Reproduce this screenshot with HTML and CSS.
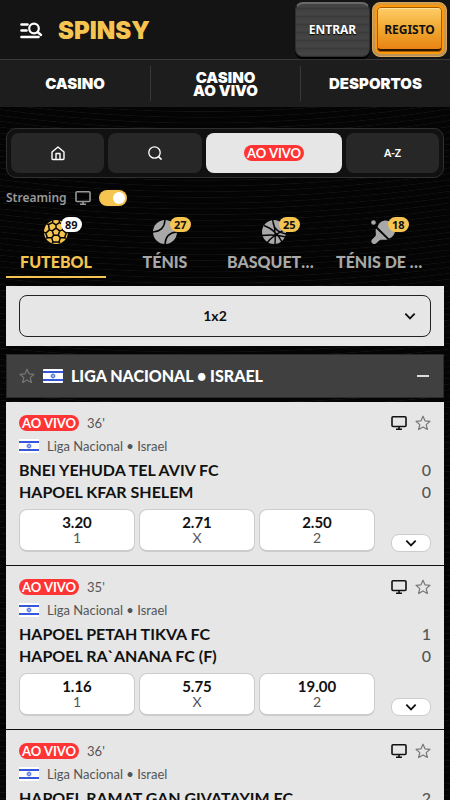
FILE: index.html
```html
<!DOCTYPE html>
<html lang="pt">
<head>
<meta charset="utf-8">
<meta name="viewport" content="width=device-width, initial-scale=1">
<title>Spinsy</title>
<link rel="stylesheet" href="styles.css">
</head>
<body>
<svg class="sprite" aria-hidden="true">
  <symbol id="star" viewBox="0 0 16 16"><path d="M8 1.200l2 4.600 5 .5-3.800 3.300 1.200 4.900L8 11.900l-4.400 2.600 1.200-4.900L1 6.300l5-.5z" fill="none" stroke="currentColor" stroke-width="1.200" stroke-linejoin="round"/></symbol>
  <symbol id="screen" viewBox="0 0 16 16"><path d="M2 1.700h12q1 0 1 1v7.800q0 1-1 1H2q-1 0-1-1V2.700q0-1 1-1zM8 11.500v2.500M5 14.200h6" fill="none" stroke="currentColor" stroke-width="1.600"/></symbol>
  <symbol id="chevron" viewBox="0 0 12 12"><path d="M2 4l4 4 4-4" fill="none" stroke="currentColor" stroke-width="1.600"/></symbol>
  <symbol id="flag" viewBox="0 0 20 14"><rect width="20" height="14" rx="1" fill="#fff"/><path d="M0 2h20v2H0zM0 10h20v2H0z" fill="#3458d8"/><path d="M10 4.600l2.100 3.500H7.900zM10 9.400L7.900 5.900h4.200z" fill="none" stroke="#3458d8" stroke-width=".7"/></symbol>
</svg>

<header class="top">
  <button class="menu" aria-label="Menu e pesquisa">
    <svg width="24" height="18" viewBox="0 0 24 18"><path d="M1.500 2.500h6M1.500 8.500h5M1.500 15h17" stroke="#fff" stroke-width="2.600" stroke-linecap="round"/><circle cx="14" cy="6.500" r="4.800" fill="none" stroke="#fff" stroke-width="2.200"/><path d="M17.500 10l3.500 3" stroke="#fff" stroke-width="2.400" stroke-linecap="round"/></svg>
  </button>
  <a class="logo" href="#">SPINSY</a>
  <div class="account">
    <button class="login">ENTRAR</button>
    <button class="register"><span>REGISTO</span></button>
  </div>
</header>
<nav class="sections">
  <a href="#">CASINO</a>
  <a href="#">CASINO<br>AO VIVO</a>
  <a href="#">DESPORTOS</a>
</nav>

<main>
  <nav class="modes">
    <button aria-label="Início"><svg width="16" height="16" viewBox="0 0 16 16"><path d="M2 7l6-5 6 5v6.500q0 1-1 1H3q-1 0-1-1zM6 14V8.500h4V14" fill="none" stroke="currentColor" stroke-width="1.400" stroke-linejoin="round"/></svg></button>
    <button aria-label="Pesquisar"><svg width="16" height="16" viewBox="0 0 16 16"><circle cx="7.500" cy="7.500" r="5.700" fill="none" stroke="currentColor" stroke-width="1.300"/><path d="M11.600 11.600l3 3" stroke="currentColor" stroke-width="1.500"/></svg></button>
    <button class="chosen"><span class="live">AO VIVO</span></button>
    <button>A-Z</button>
  </nav>

  <label class="streaming">Streaming
    <svg width="16" height="16"><use href="#screen"/></svg>
    <input type="checkbox" role="switch" checked>
  </label>

  <nav class="sports">
    <a class="sport active" href="#">
      <span class="ball"><svg width="24" height="24" viewBox="0 0 24 24"><circle cx="12" cy="12" r="12" fill="currentColor"/><g stroke="#050505" stroke-width="1.500" fill="none"><path d="M12 8.200l3.700 2.700-1.400 4.300H9.700l-1.400-4.300zM12 8.200V4.800M15.700 10.900l3-1M14.300 15.200l2 2.600M9.700 15.200l-2 2.600M8.300 10.900l-3-1M12 4.800L8.500 2.500 4.500 4.500l.8 5.400-3.500 3.200 1.500 4.500 4.400.2 1.300 4.300h6l1.300-4.300 4.400-.2 1.500-4.500-3.500-3.200.8-5.400-4-2zM8.500 2.500L8.800.3M15.500 2.500l-.3-2.200M4.500 4.500L3 4M19.500 4.500L21 4M1.800 13.100l-1.800-1M22.200 13.100l1.800-1M3.300 17.600l-1 1M20.700 17.600l1 1M9 22.100l-1 1M15 22.100l1 1"/></g></svg><b>89</b></span>
      <span class="name">FUTEBOL</span>
    </a>
    <a class="sport" href="#">
      <span class="ball"><svg width="24" height="24" viewBox="0 0 24 24"><circle cx="12" cy="12" r="12" fill="currentColor"/><path d="M-.5 12Q11.500 11.500 12-.5M24.500 12Q12.500 12.500 12 24.500" fill="none" stroke="#050505" stroke-width="1.500"/></svg><b>27</b></span>
      <span class="name">TÉNIS</span>
    </a>
    <a class="sport" href="#">
      <span class="ball"><svg width="24" height="24" viewBox="0 0 24 24"><circle cx="12" cy="12" r="12" fill="currentColor"/><path d="M2 5.500Q14 10 20 22M10.500 0Q14 10 13 24M0 15.500Q13 14 24 17M5 23Q10 16 24 9M11 3Q13 12 24 14" fill="none" stroke="#050505" stroke-width="1.400"/></svg><b>25</b></span>
      <span class="name">BASQUETEBOL</span>
    </a>
    <a class="sport" href="#">
      <span class="ball"><svg width="24" height="24" viewBox="0 0 24 24"><g fill="currentColor"><circle cx="2.500" cy="2.500" r="2.300"/><path d="M6.500 7C9-1 18-1 22 4s2 13-4 14.500z"/><path d="M5 8.500l11.500 11c-3 1-5.500-.5-8 .8L5 23.500c-3 2-6-1.500-4-4l3.500-3.500c1-2-.5-4.500.5-7.500z"/></g></svg><b>18</b></span>
      <span class="name">TÉNIS DE MESA</span>
    </a>
  </nav>

  <div class="market">
    <select aria-label="Mercado"><option>1x2</option></select>
    <svg width="14" height="14"><use href="#chevron"/></svg>
  </div>

  <h2 class="league">
    <button class="icon" aria-label="Favorito"><svg width="16" height="16"><use href="#star"/></svg></button>
    <svg width="20" height="14"><use href="#flag"/></svg>
    <span>LIGA NACIONAL • ISRAEL</span>
    <button class="icon collapse" aria-label="Recolher"><svg width="12" height="12"><path d="M0 6h12" stroke="currentColor" stroke-width="2"/></svg></button>
  </h2>

  <section class="matches">
    <article class="match">
      <div class="status"><span class="live">AO VIVO</span><time>36'</time>
        <button class="icon tv" aria-label="Ver transmissão"><svg width="16" height="16"><use href="#screen"/></svg></button>
        <button class="icon" aria-label="Favorito"><svg width="16" height="16"><use href="#star"/></svg></button></div>
      <div class="where"><svg width="20" height="14"><use href="#flag"/></svg>Liga Nacional • Israel</div>
      <div class="team"><span>BNEI YEHUDA TEL AVIV FC</span><span class="score">0</span></div>
      <div class="team"><span>HAPOEL KFAR SHELEM</span><span class="score">0</span></div>
      <div class="odds">
        <button>3.20<small>1</small></button><button>2.71<small>X</small></button><button>2.50<small>2</small></button>
        <button class="more" aria-label="Mais mercados"><svg width="14" height="14"><use href="#chevron"/></svg></button>
      </div>
    </article>
    <article class="match">
      <div class="status"><span class="live">AO VIVO</span><time>35'</time>
        <button class="icon tv" aria-label="Ver transmissão"><svg width="16" height="16"><use href="#screen"/></svg></button>
        <button class="icon" aria-label="Favorito"><svg width="16" height="16"><use href="#star"/></svg></button></div>
      <div class="where"><svg width="20" height="14"><use href="#flag"/></svg>Liga Nacional • Israel</div>
      <div class="team"><span>HAPOEL PETAH TIKVA FC</span><span class="score">1</span></div>
      <div class="team"><span>HAPOEL RA`ANANA FC (F)</span><span class="score">0</span></div>
      <div class="odds">
        <button>1.16<small>1</small></button><button>5.75<small>X</small></button><button>19.00<small>2</small></button>
        <button class="more" aria-label="Mais mercados"><svg width="14" height="14"><use href="#chevron"/></svg></button>
      </div>
    </article>
    <article class="match">
      <div class="status"><span class="live">AO VIVO</span><time>36'</time>
        <button class="icon tv" aria-label="Ver transmissão"><svg width="16" height="16"><use href="#screen"/></svg></button>
        <button class="icon" aria-label="Favorito"><svg width="16" height="16"><use href="#star"/></svg></button></div>
      <div class="where"><svg width="20" height="14"><use href="#flag"/></svg>Liga Nacional • Israel</div>
      <div class="team"><span>HAPOEL RAMAT GAN GIVATAYIM FC</span><span class="score">2</span></div>
    </article>
  </section>
</main>
</body>
</html>
```
FILE: styles.css
```css
* { box-sizing: border-box; }
html { scrollbar-width: none; }
body {
  margin: 0;
  color: #fff;
  font-family: Lato, "Noto Sans", sans-serif;
  background: #040404 repeating-radial-gradient(ellipse 1100px 700px at 45% -500px, #040404 0, #040404 6px, #121212 7px, #040404 8px, #040404 9px);
}
svg { display: block; flex: none; }
.sprite { position: absolute; width: 0; height: 0; }
a { color: inherit; text-decoration: none; }
button { font: inherit; color: inherit; border: 0; padding: 0; background: none; cursor: pointer; }
.icon { display: block; flex: none; color: #777; }

.top {
  display: flex;
  align-items: center;
  height: 60px;
  padding: 0 3px 0 20px;
  background: #141414;
  border-bottom: 1px solid #3a3a3a;
}
.menu { margin-top: 3px; }
.logo { margin: 2px 0 0 14px; font: 900 24px/24px Inter, sans-serif; color: #f5c451; }
.account { display: flex; gap: 2px; margin-left: auto; }
.login, .register { width: 75px; height: 55px; font: 700 12px/16px "Noto Sans", sans-serif; border-radius: 8px; }
.login {
  background: repeating-linear-gradient(#444 0 3px, #3b3b3b 4px 5px, #414141 6px 8px);
  border: 1px solid #303030;
  border-top: 2px solid #6a6a6a;
  box-shadow: 0 2px 1px #000;
  text-shadow: 0 1px 1px #000;
}
.register { padding: 2px; background: linear-gradient(#d99b3a, #b9925a); border: 1px solid #d8a75b; color: #111; }
.register span {
  display: grid;
  place-items: center;
  height: 49px;
  border: 2px solid #ff9708;
  border-radius: 6px;
  background: linear-gradient(#ffce6a, #efa72f 50%, #e87e10);
  box-shadow: inset 0 0 0 1px #a85c00, inset 0 2px 0 #ffe2a0, inset 0 -3px 0 #2a1600;
}

.sections { display: grid; grid-template-columns: repeat(3, 1fr); height: 47px; padding: 6px 0; background: #1d1d1d; }
.sections a { display: grid; place-content: center; text-align: center; font: 900 15px/13px Inter, sans-serif; }
.sections a + a { border-left: 1px solid #383838; }

main { padding: 21px 6px 0; }
.modes {
  display: grid;
  grid-template-columns: 93fr 94fr 136fr 93fr;
  gap: 4px;
  padding: 4px;
  background: #111;
  border: 1px solid #303030;
  border-radius: 10px;
}
.modes button { display: grid; place-items: center; height: 40px; border-radius: 8px; background: #272727; font: 600 11px/16px "Noto Sans", sans-serif; }
.modes .chosen { background: #e6e6e6; }
.modes .live, .live { height: 16px; padding: 0 3px; border-radius: 8px; background: #ff3434; color: #fff; font: 700 13px/16px Lato, sans-serif; }

.streaming { display: flex; align-items: center; gap: 8px; height: 20px; margin-top: 10px; font: 600 12px/20px "Noto Sans", sans-serif; color: #999; }
.streaming input { appearance: none; display: flex; width: 28px; height: 16px; margin: 0; padding: 2px; border-radius: 8px; background: #f5c451; justify-content: flex-end; }
.streaming input::before { content: ""; width: 12px; height: 12px; border-radius: 6px; background: #fff; }

.sports { display: flex; gap: 9px; margin-top: 8px; padding-top: 4px; overflow: hidden; }
.sport { display: flex; flex: 0 0 100px; flex-direction: column; align-items: center; min-width: 0; height: 58px; color: #a8a8a8; border-bottom: 2px solid transparent; }
.active { color: #f5c451; border-color: #f5c451; }
.ball { position: relative; }
.ball b { position: absolute; top: -3px; left: 17px; padding: 0 4px; border-radius: 8px; background: #f5c451; color: #111; font: 700 11px/15px "Noto Sans", sans-serif; }
.active b { background: #fff; }
.name { width: 100%; padding: 0 3px; margin-top: 7px; overflow: hidden; text-align: center; text-overflow: ellipsis; white-space: nowrap; font-size: 16px; line-height: 22px; font-weight: 900; }

.market { position: relative; margin-top: 8px; padding: 9px 13px; background: #e6e6e6; color: #111; }
.market select { appearance: none; display: block; width: 100%; height: 42px; padding: 0 32px 0 12px; border: 1px solid #222; border-radius: 8px; background: transparent; color: #111; font: 700 14px/20px Lato, sans-serif; text-align: center; text-align-last: center; }
.market svg { position: absolute; right: 27px; top: 23px; pointer-events: none; }

.league { display: flex; align-items: center; gap: 8px; height: 44px; margin: 8px 0 4px; padding: 0 12px; border: 1px solid #2b2b2b; background: #404040; font-size: 16px; line-height: 22px; font-weight: 900; }
.collapse { margin-left: auto; padding-right: 2px; color: #ddd; }

.matches { background: #e6e6e6; color: #111; }
.match { padding: 13px; border-bottom: 1px solid #111; }
.status { display: flex; align-items: center; gap: 8px; height: 16px; font-size: 13px; color: #555; }
.tv { margin-left: auto; color: #111; }
.where { display: flex; align-items: center; gap: 8px; height: 16px; margin: 7px 0 5px; font-size: 13px; color: #555; }
.team { display: flex; justify-content: space-between; font-size: 16px; line-height: 22px; font-weight: 700; }
.score { color: #555; font-weight: 500; }
.odds { display: grid; grid-template-columns: 1fr 1fr 1fr 52px; gap: 4px; margin-top: 6px; }
.odds button { height: 43px; border: 1px solid #ccc; border-bottom-width: 2px; border-radius: 8px; background: #fff; font-size: 15px; line-height: 16px; font-weight: 700; }
.odds small { display: block; font-size: 14px; font-weight: 400; color: #555; }
.odds .more { display: grid; place-items: center; align-self: end; justify-self: end; width: 40px; height: 18px; border-bottom-width: 1px; border-radius: 8px; }
```
